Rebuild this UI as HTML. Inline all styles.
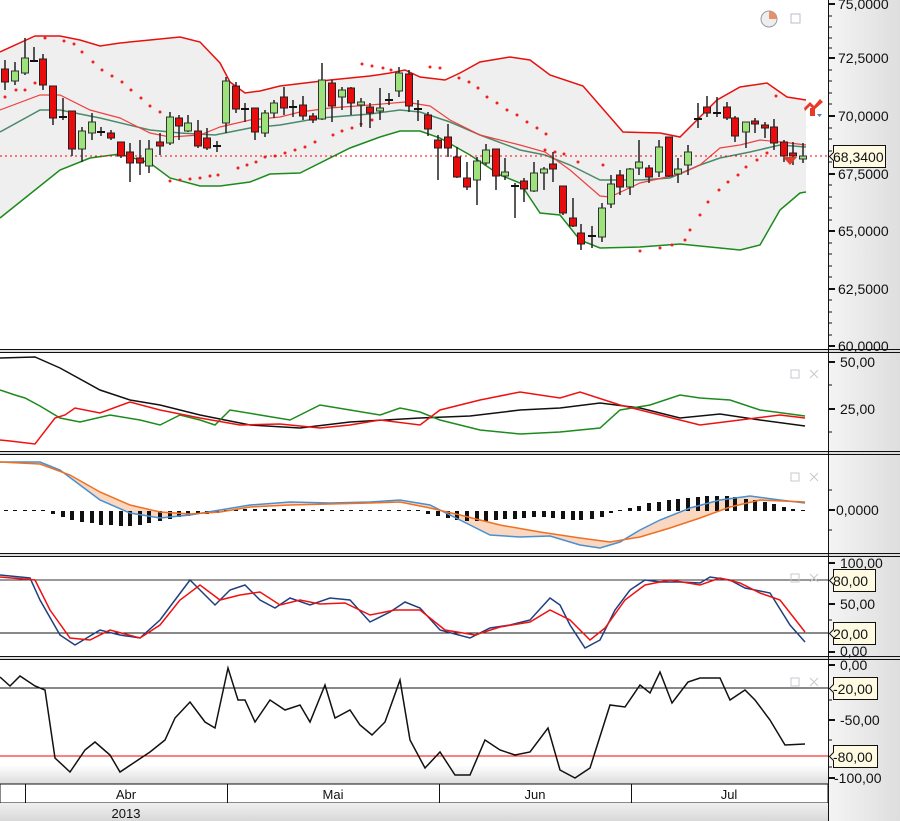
<!DOCTYPE html>
<html><head><meta charset="utf-8"><style>
body{margin:0;width:900px;height:821px;overflow:hidden;background:#fff;font-family:"Liberation Sans",sans-serif}
svg{display:block}
text{font-family:"Liberation Sans",sans-serif;font-size:14px;fill:#111}
</style></head><body>
<svg width="900" height="821" viewBox="0 0 900 821" xmlns="http://www.w3.org/2000/svg">
<defs>
<linearGradient id="ax" x1="0" y1="0" x2="1" y2="0"><stop offset="0" stop-color="#f4f4f4"/><stop offset="1" stop-color="#dedede"/></linearGradient>
<linearGradient id="bot" x1="0" y1="0" x2="0" y2="1"><stop offset="0" stop-color="#fff"/><stop offset="1" stop-color="#dcdcdc"/></linearGradient>
<linearGradient id="yr" x1="0" y1="0" x2="0" y2="1"><stop offset="0" stop-color="#f0f0f0"/><stop offset="1" stop-color="#d8d8d8"/></linearGradient>
</defs>
<rect x="0" y="0" width="900" height="821" fill="#fff"/>
<rect x="828" y="0" width="72" height="821" fill="url(#ax)"/>
<rect x="0" y="765" width="828" height="19" fill="url(#bot)"/>

<!-- Bollinger fill -->
<polygon fill="#efefef" points="0,52 35,36 60,36 80,40 100,46 120,43 150,40 180,37 200,42 220,63 230,82 245,93 260,91 280,86 330,80 370,76 390,73 405,70 420,77 445,80 460,73 480,62 510,57 530,60 550,75 583,86 623,132 660,133 680,137 697,120 717,100 740,87 767,83 787,97 806,100 806,192 800,193 780,210 760,245 740,250 720,248 680,244 640,247 600,248 580,240 560,215 540,213 520,183 500,175 470,155 440,138 420,131 400,131 380,137 350,148 300,173 270,174 250,182 220,186 200,186 170,178 150,163 120,154 90,158 60,170 25,198 0,218"/>
<polyline fill="none" stroke="#e8100c" stroke-width="1.5" points="0,52 35,36 60,36 80,40 100,46 120,43 150,40 180,37 200,42 220,63 230,82 245,93 260,91 280,86 330,80 370,76 390,73 405,70 420,77 445,80 460,73 480,62 510,57 530,60 550,75 583,86 623,132 660,133 680,137 697,120 717,100 740,87 767,83 787,97 806,100"/>
<polyline fill="none" stroke="#1d8a1d" stroke-width="1.5" points="0,218 25,198 60,170 90,158 120,154 150,163 170,178 200,186 220,186 250,182 270,174 300,173 350,148 380,137 400,131 420,131 440,138 470,155 500,175 520,183 540,213 560,215 580,240 600,248 640,247 680,244 720,248 740,250 760,245 780,210 800,193 806,192"/>
<polyline fill="none" stroke="#4a8a6a" stroke-width="1.5" points="0,132 40,110 60,110 100,118 150,130 180,133 215,135 250,128 280,125 320,118 370,114 400,110 420,112 450,122 480,135 520,150 545,155 570,165 600,180 640,180 670,178 700,165 720,158 750,152 780,145 806,147"/>
<polyline fill="none" stroke="#f04040" stroke-width="1.2" points="0,110 40,95 60,95 90,110 120,118 150,133 170,137 200,135 220,127 250,120 280,117 300,112 330,108 370,105 405,102 430,106 450,120 480,135 520,145 545,152 570,170 600,196 610,197 640,183 680,174 700,165 720,148 740,145 760,140 790,143 806,145"/>

<!-- SAR dots -->
<g fill="#f02020">
<circle cx="5" cy="97" r="1.5"/><circle cx="16" cy="90" r="1.5"/><circle cx="25" cy="90" r="1.5"/><circle cx="35" cy="83" r="1.5"/>
<circle cx="45" cy="38" r="1.5"/><circle cx="64" cy="41" r="1.5"/><circle cx="74" cy="44" r="1.5"/><circle cx="82" cy="52" r="1.5"/><circle cx="93" cy="62" r="1.5"/><circle cx="102" cy="70" r="1.5"/><circle cx="112" cy="76" r="1.5"/><circle cx="122" cy="82" r="1.5"/><circle cx="131" cy="90" r="1.5"/><circle cx="141" cy="98" r="1.5"/><circle cx="150" cy="106" r="1.5"/><circle cx="160" cy="112" r="1.5"/>
<circle cx="170" cy="181" r="1.5"/><circle cx="180" cy="180" r="1.5"/><circle cx="190" cy="179" r="1.5"/><circle cx="200" cy="178" r="1.5"/><circle cx="210" cy="176" r="1.5"/><circle cx="218" cy="175" r="1.5"/><circle cx="238" cy="168" r="1.5"/><circle cx="247" cy="165" r="1.5"/><circle cx="256" cy="162" r="1.5"/><circle cx="265" cy="157" r="1.5"/><circle cx="275" cy="156" r="1.5"/><circle cx="285" cy="153" r="1.5"/><circle cx="295" cy="150" r="1.5"/><circle cx="305" cy="147" r="1.5"/><circle cx="315" cy="142" r="1.5"/><circle cx="333" cy="135" r="1.5"/><circle cx="342" cy="131" r="1.5"/><circle cx="352" cy="128" r="1.5"/><circle cx="361" cy="124" r="1.5"/><circle cx="372" cy="120" r="1.5"/>
<circle cx="362" cy="64" r="1.5"/><circle cx="372" cy="66" r="1.5"/><circle cx="383" cy="68" r="1.5"/><circle cx="391" cy="70" r="1.5"/><circle cx="430" cy="67" r="1.5"/><circle cx="440" cy="68" r="1.5"/>
<circle cx="459" cy="78" r="1.5"/><circle cx="469" cy="82" r="1.5"/><circle cx="478" cy="88" r="1.5"/><circle cx="487" cy="97" r="1.5"/><circle cx="497" cy="103" r="1.5"/><circle cx="507" cy="110" r="1.5"/><circle cx="517" cy="115" r="1.5"/><circle cx="527" cy="122" r="1.5"/><circle cx="537" cy="128" r="1.5"/><circle cx="546" cy="134" r="1.5"/><circle cx="545" cy="150" r="1.5"/><circle cx="555" cy="152" r="1.5"/><circle cx="564" cy="154" r="1.5"/><circle cx="578" cy="162" r="1.5"/><circle cx="603" cy="165" r="1.5"/>
<circle cx="640" cy="251" r="1.5"/><circle cx="660" cy="248" r="1.5"/><circle cx="672" cy="245" r="1.5"/><circle cx="685" cy="240" r="1.5"/><circle cx="690" cy="230" r="1.5"/><circle cx="700" cy="215" r="1.5"/><circle cx="708" cy="202" r="1.5"/><circle cx="719" cy="190" r="1.5"/><circle cx="728" cy="182" r="1.5"/><circle cx="738" cy="175" r="1.5"/><circle cx="746" cy="167" r="1.5"/><circle cx="757" cy="160" r="1.5"/><circle cx="767" cy="153" r="1.5"/><circle cx="776" cy="96" r="1.5"/>
</g>
<line x1="0" y1="156" x2="828" y2="156" stroke="#f00" stroke-dasharray="2,3"/>

<!-- wicks -->
<path stroke="#222" stroke-width="1.5" fill="none" d="M5 60V90M15 62V85M25 38V75M34 47V61M43 54V90M53 86V125M63 98V120M72 111V156M82 127V162M92 113V140M101 127V136M111 130V140M121 142V158M130 143V182M140 140V175M149 140V173M160 133V155M170 112V145M179 115V140M188 115V132M198 120V148M207 128V150M217 141V152M226 77V133M236 82V113M245 103V122M255 108V140M265 110V137M274 100V118M284 87V115M293 100V117M303 96V120M313 113V123M322 63V120M332 80V122M342 87V110M351 87V115M361 98V127M370 103V128M380 88V120M389 93V105M399 67V97M409 70V112M418 100V121M428 112V136M438 135V180M448 124V157M457 147V178M467 162V190M477 157V205M486 144V165M496 149V190M505 158V180M515 183V218M524 178V202M534 162V192M544 167V190M553 152V182M563 186V215M573 198V227M581 224V250M592 226V248M602 203V242M611 175V208M620 170V195M630 168V195M639 140V175M649 165V183M659 140V177M669 137V177M678 158V183M688 145V175M698 103V128M707 96V117M717 97V117M727 102V120M735 116V142M746 122V148M755 118V133M765 122V138M774 119V150M784 140V162M793 142V165M803 143V163"/>
<!-- dojis -->
<path stroke="#111" stroke-width="2" d="M30 61H38M59 117H67M97 132H105M213 146H221M241 109H249M289 107H297M385 100H393M414 109H422M511 186H519M588 236H596M694 119H702M713 113H721"/>
<!-- red bodies -->
<g fill="#e80c0c" stroke="#222">
<rect x="1.5" y="69" width="7" height="13"/><rect x="39.5" y="59" width="7" height="26"/><rect x="49.5" y="86" width="7" height="32"/><rect x="68.5" y="111" width="7" height="38"/><rect x="107.5" y="133" width="7" height="5"/><rect x="117.5" y="142" width="7" height="14"/><rect x="126.5" y="152" width="7" height="11"/><rect x="136.5" y="158" width="7" height="5"/><rect x="156.5" y="142" width="7" height="4"/><rect x="175.5" y="118" width="7" height="8"/><rect x="194.5" y="131" width="7" height="15"/><rect x="203.5" y="138" width="7" height="10"/><rect x="232.5" y="86" width="7" height="23"/><rect x="251.5" y="108" width="7" height="24"/><rect x="280.5" y="97" width="7" height="11"/><rect x="299.5" y="105" width="7" height="11"/><rect x="309.5" y="116" width="7" height="4"/><rect x="328.5" y="83" width="7" height="23"/><rect x="347.5" y="88" width="7" height="15"/><rect x="366.5" y="107" width="7" height="6"/><rect x="405.5" y="74" width="7" height="32"/><rect x="424.5" y="115" width="7" height="14"/><rect x="434.5" y="140" width="7" height="8"/><rect x="444.5" y="137" width="7" height="11"/><rect x="453.5" y="157" width="7" height="20"/><rect x="463.5" y="178" width="7" height="9"/><rect x="492.5" y="149" width="7" height="27"/><rect x="520.5" y="181" width="7" height="8"/><rect x="549.5" y="164" width="7" height="5"/><rect x="559.5" y="186" width="7" height="27"/><rect x="569.5" y="218" width="7" height="8"/><rect x="577.5" y="233" width="7" height="11"/><rect x="616.5" y="175" width="7" height="12"/><rect x="645.5" y="168" width="7" height="9"/><rect x="665.5" y="137" width="7" height="39"/><rect x="703.5" y="107" width="7" height="6"/><rect x="723.5" y="107" width="7" height="11"/><rect x="731.5" y="118" width="7" height="18"/><rect x="751.5" y="121" width="7" height="3"/><rect x="761.5" y="125" width="7" height="3"/><rect x="770.5" y="127" width="7" height="16"/><rect x="780.5" y="142" width="7" height="14"/><rect x="789.5" y="153" width="7" height="3"/>
</g>
<g fill="#9de27a" stroke="#333">
<rect x="11.5" y="71" width="7" height="10"/><rect x="21.5" y="58" width="7" height="15"/><rect x="78.5" y="131" width="7" height="18"/><rect x="88.5" y="122" width="7" height="11"/><rect x="145.5" y="149" width="7" height="17"/><rect x="166.5" y="117" width="7" height="26"/><rect x="184.5" y="123" width="7" height="8"/><rect x="222.5" y="81" width="7" height="42"/><rect x="261.5" y="113" width="7" height="20"/><rect x="270.5" y="103" width="7" height="10"/><rect x="318.5" y="80" width="7" height="39"/><rect x="338.5" y="90" width="7" height="7"/><rect x="357.5" y="102" width="7" height="3"/><rect x="376.5" y="108" width="7" height="3"/><rect x="395.5" y="73" width="7" height="18"/><rect x="473.5" y="161" width="7" height="19"/><rect x="482.5" y="150" width="7" height="13"/><rect x="501.5" y="172" width="7" height="4"/><rect x="530.5" y="173" width="7" height="18"/><rect x="540.5" y="169" width="7" height="4"/><rect x="598.5" y="208" width="7" height="29"/><rect x="607.5" y="184" width="7" height="20"/><rect x="626.5" y="169" width="7" height="18"/><rect x="635.5" y="162" width="7" height="6"/><rect x="655.5" y="147" width="7" height="25"/><rect x="674.5" y="169" width="7" height="5"/><rect x="684.5" y="152" width="7" height="13"/><rect x="742.5" y="122" width="7" height="10"/><rect x="799.5" y="156" width="7" height="3"/>
</g>
<!-- signal icons -->
<path d="M783 157h14l-7 8z" fill="#e83a2a"/>
<path d="M804 108l6-6 4 4 6-7 3 3-9 8-4-4-5 5z" fill="#e83a2a"/>
<rect x="810" y="108" width="5" height="8" fill="#e83a2a"/>
<path d="M817 114h5l-2.5 3z" fill="#4a80d0"/>
<circle cx="769" cy="19" r="8" fill="#eee" stroke="#99a"/><path d="M769 19V11a8 8 0 0 1 8 8z" fill="#e8906a"/>
<rect x="791" y="14" width="9" height="9" fill="none" stroke="#bbc"/>

<!-- Panel separators -->
<g fill="#ddd" stroke="#111">
<rect x="-1" y="349.5" width="902" height="3"/><rect x="-1" y="451.5" width="902" height="3"/><rect x="-1" y="553.5" width="902" height="3"/><rect x="-1" y="656.5" width="902" height="3"/>
</g>

<!-- ADX -->
<polyline fill="none" stroke="#111" stroke-width="1.5" points="0,358 35,357 60,368 100,390 130,400 160,405 200,415 250,425 300,428 350,422 420,418 470,416 520,410 560,408 600,403 640,408 680,418 720,414 760,420 805,426"/>
<polyline fill="none" stroke="#1d8a1d" stroke-width="1.5" points="0,390 15,395 25,398 40,406 60,418 80,422 110,415 140,420 160,425 180,415 200,420 215,425 230,410 260,415 290,420 320,405 350,410 380,415 400,408 420,412 440,420 480,430 520,434 560,432 600,428 620,410 650,405 680,395 700,398 730,400 760,410 805,416"/>
<polyline fill="none" stroke="#f01010" stroke-width="1.5" points="0,440 10,441 35,444 55,418 65,415 75,408 100,413 130,402 160,410 200,418 240,425 280,424 320,428 350,425 380,420 420,425 440,410 480,400 520,392 560,398 580,392 620,405 660,415 700,425 740,420 780,415 805,418"/>

<!-- MACD -->
<polygon fill="#f8cdb0" opacity=".8" points="0,462 40,462 60,470 80,485 100,500 130,513 160,518 190,515 220,510 250,505 290,502 330,503 370,502 400,500 430,505 460,520 490,535 520,537 550,536 580,545 600,548 620,542 640,530 660,520 690,508 720,500 750,496 780,500 805,503 805,502 760,500 730,507 700,518 670,528 640,537 610,542 580,538 540,532 500,525 460,515 430,508 400,502 370,503 330,504 290,505 250,507 220,512 190,514 160,512 130,505 100,492 70,475 40,464 0,462"/>
<path stroke="#111" stroke-width="4" d="M6 510v1M15 510v1M25 510v1M34 510v1M43 510v1M53 511v3M63 511v6M72 511v9M82 511v11M92 511v12M101 511v14M111 511v14M121 511v15M130 511v15M140 511v14M149 511v12M160 511v10M170 511v8M179 511v6M188 511v5M198 511v3M207 511v3M217 511v2M226 510v1M236 509v2M245 509v2M255 509v2M265 509v2M274 509v2M284 509v2M293 509v2M303 509v2M313 510v1M322 509v2M332 510v1M342 510v1M351 510v1M361 510v1M370 510v1M380 510v1M389 510v1M399 510v1M409 510v1M418 510v1M428 511v3M438 511v5M448 511v7M457 511v9M467 511v10M477 511v10M486 511v10M496 511v9M505 511v8M515 511v8M524 511v7M534 511v6M544 511v6M553 511v7M563 511v8M573 511v9M581 511v9M592 511v8M602 511v6M611 511v2M620 510v1M630 508v3M639 506v5M649 503v8M659 502v9M669 500v11M678 499v12M688 498v13M698 497v14M707 496v15M717 496v15M727 496v15M735 497v14M746 499v12M755 500v11M765 502v9M774 504v7M784 507v4M793 509v2M803 510v1"/>
<polyline fill="none" stroke="#4a8fd0" stroke-width="1.5" points="0,462 40,462 60,470 80,485 100,500 130,513 160,518 190,515 220,510 250,505 290,502 330,503 370,502 400,500 430,505 460,520 490,535 520,537 550,536 580,545 600,548 620,542 640,530 660,520 690,508 720,500 750,496 780,500 805,503"/>
<polyline fill="none" stroke="#f07020" stroke-width="1.5" points="0,462 40,464 70,475 100,492 130,505 160,512 190,514 220,512 250,507 290,505 330,504 370,503 400,502 430,508 460,515 500,525 540,532 580,538 610,542 640,537 670,528 700,518 730,507 760,500 805,502"/>

<!-- Stochastic -->
<line x1="0" y1="580" x2="828" y2="580" stroke="#333"/>
<line x1="0" y1="633" x2="828" y2="633" stroke="#111"/>
<polyline fill="none" stroke="#1f3f80" stroke-width="1.5" points="0,575 30,578 40,600 60,635 75,645 100,630 120,635 140,638 160,620 175,600 190,580 200,590 215,605 230,590 245,585 260,600 275,608 290,598 310,605 330,598 350,600 370,622 390,612 405,602 420,608 440,630 470,638 490,628 510,625 530,620 550,598 560,605 570,625 585,648 600,640 615,610 630,590 645,580 660,582 680,582 700,583 710,577 730,580 745,588 770,593 790,625 805,642"/>
<polyline fill="none" stroke="#f01010" stroke-width="1.5" points="0,577 35,580 50,610 70,638 90,640 110,630 140,638 160,625 180,600 200,585 220,600 240,595 260,592 280,605 300,600 320,604 345,603 370,615 395,610 420,610 445,630 475,635 500,627 530,622 550,610 570,620 590,640 605,628 625,600 645,585 670,580 700,585 720,578 740,583 760,593 780,600 805,632"/>

<!-- Williams -->
<line x1="0" y1="688" x2="828" y2="688" stroke="#111"/>
<line x1="0" y1="756" x2="828" y2="756" stroke="#f00"/>
<polyline fill="none" stroke="#111" stroke-width="1.5" points="0,677 10,686 20,676 35,686 45,690 55,758 70,772 85,750 95,742 110,755 120,772 135,762 150,752 165,740 175,718 190,702 205,722 215,728 228,668 238,700 245,700 255,722 270,700 285,710 300,705 310,722 325,685 335,718 350,710 360,725 372,735 385,722 400,680 410,740 425,768 440,752 455,775 470,775 485,740 500,750 515,755 530,752 548,728 560,770 575,778 590,768 610,705 625,707 640,685 650,693 660,672 672,703 688,682 700,678 720,678 730,700 745,690 755,700 770,720 785,745 805,744"/>

<!-- small panel icons -->
<g fill="none" stroke="#c4c8d0"><rect x="791" y="370" width="8" height="8"/><path d="M810 370l8 8M818 370l-8 8"/><rect x="791" y="473" width="8" height="8"/><path d="M810 473l8 8M818 473l-8 8"/><rect x="791" y="574" width="8" height="8"/><path d="M810 574l8 8M818 574l-8 8"/><rect x="791" y="678" width="8" height="8"/><path d="M810 678l8 8M818 678l-8 8"/></g>

<!-- time axis -->
<rect x="0" y="784" width="828" height="19" fill="#fff" stroke="#111"/>
<rect x="0" y="803" width="828" height="18" fill="url(#yr)"/>
<path stroke="#111" d="M25.5 784v19M227.5 784v19M439.5 784v19M631.5 784v19"/>
<g text-anchor="middle"><text x="126" y="799" style="font-size:13px">Abr</text><text x="333" y="799" style="font-size:13px">Mai</text><text x="535" y="799" style="font-size:13px">Jun</text><text x="729" y="799" style="font-size:13px">Jul</text><text x="126" y="818" style="font-size:13px">2013</text></g>

<!-- right axis -->
<line x1="828.5" y1="0" x2="828.5" y2="821" stroke="#111"/>
<path stroke="#111" stroke-width="2" d="M829 4h6M829 58h6M829 116h6M829 174h6M829 231h6M829 289h6M829 346h6M829 362h6M829 409h6M829 510h6M829 563h6M829 604h6M829 652h6M829 665h6M829 720h6M829 778h6"/>
<path stroke="#111" d="M829 16h3M829 27h3M829 38h3M829 48h3M829 70h3M829 81h3M829 93h3M829 104h3M829 128h3M829 139h3M829 151h3M829 162h3M829 185h3M829 197h3M829 208h3M829 220h3M829 243h3M829 254h3M829 266h3M829 277h3M829 300h3M829 312h3M829 323h3M829 335h3M829 385h3M829 432h3M829 490h3M829 530h3M829 620h3M829 700h3M829 740h3M829 767h3"/>
<g>
<text x="838" y="9">75,0000</text><text x="838" y="63">72,5000</text><text x="838" y="121">70,0000</text><text x="838" y="179">67,5000</text><text x="838" y="236">65,0000</text><text x="838" y="294">62,5000</text><text x="838" y="351">60,0000</text>
<text x="840" y="367">50,00</text><text x="840" y="414">25,00</text><text x="836" y="515">0,0000</text>
<text x="840" y="568">100,00</text><text x="840" y="609">50,00</text><text x="840" y="656">0,00</text>
<text x="840" y="670">0,00</text><text x="840" y="725">-50,00</text><text x="834" y="783">-100,00</text>
</g>
<g fill="#fffbe2" stroke="#111">
<path d="M833.5 145.5h52v22h-52v-7l-4-4 4-4z"/>
<path d="M833.5 569.5h42v22h-42v-7l-4-4 4-4z"/>
<path d="M833.5 622.5h42v22h-42v-7l-4-4 4-4z"/>
<path d="M833.5 677.5h44v22h-44v-7l-4-4 4-4z"/>
<path d="M833.5 745.5h44v22h-44v-7l-4-4 4-4z"/>
</g>
<text x="833" y="162">68,3400</text>
<text x="833" y="586">80,00</text>
<text x="833" y="639">20,00</text>
<text x="833" y="694">-20,00</text>
<text x="833" y="762">-80,00</text>
</svg>
</body></html>
